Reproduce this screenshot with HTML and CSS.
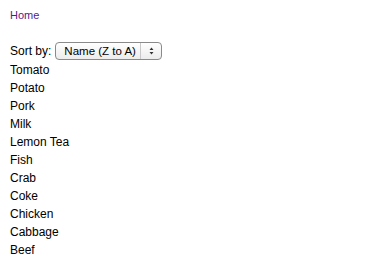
FILE: index.html
```html
<!DOCTYPE html>
<html>
<head>
<meta charset="utf-8">
<link rel="stylesheet" href="styles.css">
</head>
<body>
<nav class="crumbs"><a class="home" href="#">Home</a></nav>
<div class="sort">
  <span class="label">Sort by:</span>
  <div class="select">
    <span class="value">Name (Z to A)</span>
    <span class="arrows">
      <svg width="7" height="10" viewBox="0 0 7 10"><path d="M3.5 1.5 L5.5 4 L1.5 4 Z M3.5 8.5 L5.5 6 L1.5 6 Z" fill="#333"/></svg>
    </span>
  </div>
</div>
<ul class="items">
  <li>Tomato</li>
  <li>Potato</li>
  <li>Pork</li>
  <li>Milk</li>
  <li>Lemon Tea</li>
  <li>Fish</li>
  <li>Crab</li>
  <li>Coke</li>
  <li>Chicken</li>
  <li>Cabbage</li>
  <li>Beef</li>
</ul>
</body>
</html>
```
FILE: styles.css
```css
html, body {
  margin: 0;
  padding: 0;
  background: #fff;
}
body {
  padding: 8px 10px;
  font-family: "Liberation Sans", Arial, sans-serif;
  font-size: 12px;
  color: #000;
}
.crumbs {
  height: 14px;
  line-height: 14px;
  font-size: 11px;
}
.home {
  color: #551a8b;
  text-decoration: none;
}
.sort {
  margin-top: 19px;
  display: flex;
  align-items: center;
  gap: 4px;
  height: 20px;
}
.label {
  font-size: 12px;
}
.select {
  box-sizing: border-box;
  width: 107px;
  height: 18px;
  border: 1px solid #8a8a8a;
  border-radius: 4px;
  background: linear-gradient(#ffffff, #ececec);
  display: flex;
  align-items: center;
  font-size: 11.5px;
}
.value {
  flex: 1;
  padding-left: 8px;
}
.arrows {
  width: 20px;
  height: 100%;
  border-left: 1px solid #c8c8c8;
  display: flex;
  align-items: center;
  justify-content: center;
}
.items {
  list-style: none;
  margin: 0;
  padding: 0;
}
.items li {
  height: 18px;
  line-height: 18px;
}
```
